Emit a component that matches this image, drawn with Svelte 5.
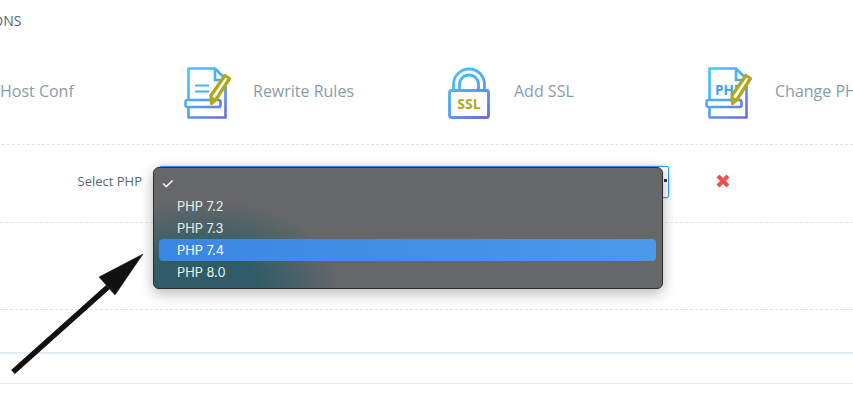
<script>
  const actions = [
    { label: "vHost Conf", icon: "doc" },
    { label: "Rewrite Rules", icon: "doc" },
    { label: "Add SSL", icon: "ssl" },
    { label: "Change PHP", icon: "php" }
  ];
  const versions = ["PHP 7.2", "PHP 7.3", "PHP 7.4", "PHP 8.0"];
  const selected = "PHP 7.4";
</script>

<svg class="defs" width="0" height="0" aria-hidden="true">
  <defs>
    <linearGradient id="blue" gradientUnits="userSpaceOnUse" x1="4" y1="5" x2="44" y2="55">
      <stop offset="0" stop-color="#3fcbfd" />
      <stop offset="0.5" stop-color="#4fa6f5" />
      <stop offset="1" stop-color="#6f68dd" />
    </linearGradient>
  </defs>
</svg>

<div class="page">
  <h2 class="title">ACTIONS</h2>

  <div class="actions">
    {#each actions as action}
      <div class="action">
        {#if action.icon === "ssl"}
          <svg class="icon" width="52" height="60" viewBox="-1 0 52 60">
            <path d="M8.500 27V21.500a15.500 15.500 0 0 1 31 0V27M14.500 27V21.500a9.500 9.500 0 0 1 19 0V27" fill="none" stroke="url(#blue)" stroke-width="2.800" />
            <rect x="4.500" y="27.500" width="39" height="27" rx="2" fill="#fff" stroke="url(#blue)" stroke-width="2.800" />
            <text x="24" y="46" class="ssl">SSL</text>
          </svg>
        {:else}
          <svg class="icon" width="52" height="60" viewBox={action.icon === "php" ? "1 0 52 60" : "0 0 52 60"}>
            <path d="M5.500 37V5.500H32L42.500 16V54.500H5.500V44" fill="none" stroke="url(#blue)" stroke-width="2.600" stroke-linejoin="round" />
            <path d="M32 5.500V17H42" fill="none" stroke="url(#blue)" stroke-width="2.600" />
            {#if action.icon === "php"}
              <text x="11" y="32" class="php">PHP</text>
            {:else}
              <path d="M12 22.500H26M12 28.500H26" fill="none" stroke="url(#blue)" stroke-width="2.200" />
            {/if}
            <rect x="2.500" y="37" width="35" height="7" rx="2" fill="#fff" stroke="url(#blue)" stroke-width="2.600" />
            <path d="M28.500 40.500L28 32.500 42 12.500 46.500 15.500 33 36.500Z" fill="#fff" stroke="#b0a91c" stroke-width="3.300" stroke-linejoin="round" />
            <path d="M28.500 40.500L28 34 33 37Z" fill="#b0a91c" stroke="#b0a91c" stroke-width="1.500" stroke-linejoin="round" />
          </svg>
        {/if}
        <span class="label">{action.label}</span>
      </div>
    {/each}
  </div>

  <div class="php-row">
    <span class="select-label">Select PHP</span>
    <div class="select-box">
      <div class="field"><span class="caret"></span></div>
      <ul class="popup">
        <li class="blank">✓</li>
        {#each versions as v}
          <li class:active={v === selected}>{v}</li>
        {/each}
      </ul>
    </div>
    <svg class="close" width="16" height="16" viewBox="0 0 16 16">
      <path d="M3 3l10 10M13 3L3 13" stroke="#ea4f52" stroke-width="4.200" />
    </svg>
  </div>

  <div class="empty-row"></div>
  <div class="gap-row"></div>
  <div class="table-row"></div>

  <svg class="arrow" width="150" height="130" viewBox="0 240 150 130" overflow="visible">
    <path d="M13 372L108 287" stroke="#111" stroke-width="5.500" fill="none" />
    <path d="M143 254L99 277 115 295Z" fill="#111" stroke="#111" stroke-width="0.500" />
  </svg>
</div>

<style>
  :global(body) {
    margin: 0;
    background: #fff;
  }

  .defs {
    position: absolute;
  }

  .page {
    position: relative;
    width: 853px;
    height: 414px;
    overflow: hidden;
    background: #fff;
    font-family: "Open Sans", sans-serif;
  }

  .title {
    margin: 0 0 0 -37px;
    height: 42px;
    line-height: 42px;
    font-size: 14px;
    font-weight: 400;
    color: #5a6470;
  }

  .actions {
    display: flex;
    margin-left: -78px;
    height: 102px;
    border-bottom: 1px dashed #dfe4ec;
  }

  .action {
    flex: 0 0 261px;
    display: flex;
    align-items: center;
    height: 98px;
  }

  .icon {
    flex: 0 0 auto;
    margin: 4px 18px 0 0;
  }

  .label {
    font-size: 16px;
    color: #8a9ba8;
    white-space: nowrap;
  }

  .ssl {
    font: 700 14px "Open Sans", sans-serif;
    fill: #b0a91c;
    text-anchor: middle;
  }

  .php {
    font: 700 13.500px "Open Sans", sans-serif;
    fill: #3b9fee;
  }

  .php-row {
    display: flex;
    align-items: flex-start;
    height: 77px;
    border-bottom: 1px dashed #dfe4ec;
  }

  .select-label {
    width: 142px;
    margin-top: 27px;
    text-align: right;
    font-size: 13px;
    color: #5c6570;
  }

  .select-box {
    position: relative;
    margin: 21px 0 0 17px;
    width: 510px;
    height: 32px;
  }

  .field {
    box-sizing: border-box;
    height: 100%;
    border: 1px solid #3b9bee;
    border-radius: 2px;
    box-shadow: 0 0 3px rgba(59, 155, 238, 0.5);
  }

  .caret {
    position: absolute;
    right: 2px;
    top: 13px;
    width: 3px;
    height: 3px;
    background: #333;
  }

  .popup {
    position: absolute;
    left: -6px;
    top: 1px;
    width: 510px;
    height: 122px;
    margin: 0;
    padding: 4px 6px 4px 5px;
    box-sizing: border-box;
    list-style: none;
    border: 1px solid #2e2e2e;
    border-radius: 6px;
    box-shadow: 0 4px 14px rgba(0, 0, 0, 0.3);
    background:
      radial-gradient(ellipse 135px 88px at 50px 120px, #2f5c68 40%, rgba(47, 92, 104, 0) 100%),
      #656768;
    font-family: Inter, sans-serif;
    font-size: 12.800px;
    color: #eef0f0;
  }

  .popup li {
    height: 22px;
    line-height: 24px;
    padding-left: 18px;
    border-radius: 4px;
  }

  .popup .blank {
    padding-left: 2px;
    font-size: 15px;
    color: #fff;
    line-height: 23px;
    height: 23px;
  }

  .popup .active {
    background: linear-gradient(90deg, #3a86e4, #4c98ea);
    color: #fff;
  }

  .close {
    margin: 28px 0 0 46px;
  }

  .empty-row {
    height: 86px;
    border-bottom: 1px dashed #dfe4ec;
  }

  .gap-row {
    height: 42px;
    border-bottom: 2px solid #e4ebf4;
  }

  .table-row {
    height: 29px;
    border-bottom: 1px solid #e4ebf4;
  }

  .arrow {
    position: absolute;
    left: 0;
    top: 240px;
  }
</style>
